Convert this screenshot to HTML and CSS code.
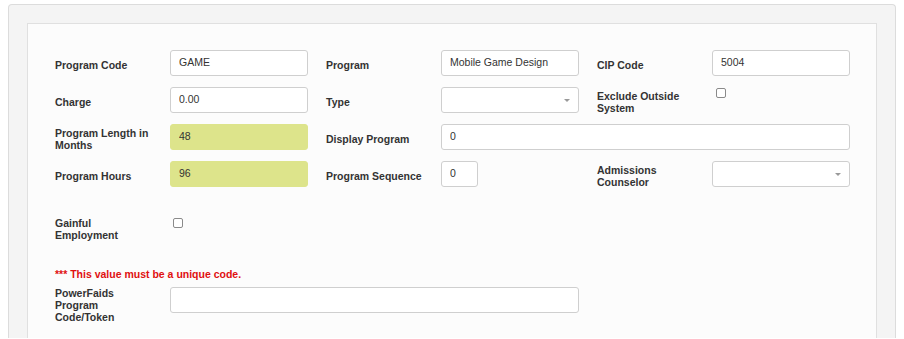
FILE: index.html
```html
<!DOCTYPE html>
<html lang="en">
<head>
    <meta charset="UTF-8">
    <title>Program Setup</title>
    <link rel="stylesheet" href="styles.css">
</head>
<body>
    <div class="panel">
        <div class="panel-body">
            <div class="form-grid">
                <label class="field-label">Program Code</label>
                <input class="field-input" type="text" value="GAME">
                <label class="field-label">Program</label>
                <input class="field-input" type="text" value="Mobile Game Design">
                <label class="field-label">CIP Code</label>
                <input class="field-input" type="text" value="5004">

                <label class="field-label">Charge</label>
                <input class="field-input" type="text" value="0.00">
                <label class="field-label">Type</label>
                <div class="select-box"><span class="select-arrow"></span></div>
                <label class="field-label">Exclude Outside System</label>
                <input class="check top-check" type="checkbox">

                <label class="field-label">Program Length in Months</label>
                <input class="field-input required" type="text" value="48">
                <label class="field-label">Display Program</label>
                <input class="field-input wide" type="text" value="0">

                <label class="field-label">Program Hours</label>
                <input class="field-input required" type="text" value="96">
                <label class="field-label">Program Sequence</label>
                <input class="field-input tiny" type="text" value="0">
                <label class="field-label">Admissions Counselor</label>
                <div class="select-box"><span class="select-arrow"></span></div>
            </div>

            <div class="form-row gainful">
                <label class="field-label">Gainful Employment</label>
                <input class="check" type="checkbox">
            </div>

            <div class="unique-note">*** This value must be a unique code.</div>

            <div class="form-row powerfaids">
                <label class="field-label">PowerFaids Program Code/Token</label>
                <input class="field-input long" type="text" value="">
            </div>
        </div>
    </div>
</body>
</html>
```

FILE: styles.css
```css
body {
    margin: 0;
    background: #fff;
    font-family: "Liberation Sans", Arial, sans-serif;
    color: #333;
    overflow: hidden;
}
.panel {
    margin: 4px 8px 0 8px;
    padding: 18px 18px 0 18px;
    background: #f4f4f4;
    border: 1px solid #dcdcdc;
    border-bottom: none;
    border-radius: 4px 4px 0 0;
}
.panel-body {
    background: #fcfcfc;
    border: 1px solid #e0e0e0;
    border-bottom: none;
    padding: 26px 27px 15px 27px;
}
.form-grid {
    display: grid;
    grid-template-columns: 115px 156px 115px 156px 115px 138px;
    grid-auto-rows: 26px;
    row-gap: 11px;
    align-items: center;
}
.field-label {
    font-size: 10.5px;
    font-weight: bold;
    line-height: 12px;
    padding-top: 3px;
    padding-right: 17px;
    color: #333;
}
.field-input {
    box-sizing: border-box;
    width: 138px;
    height: 26px;
    margin: 0;
    padding: 0 8px 2px 8px;
    border: 1px solid #cfcfcf;
    border-radius: 3px;
    background: #fff;
    font-family: "Liberation Sans", Arial, sans-serif;
    font-size: 10.5px;
    color: #333;
    outline: none;
}
.field-input.required {
    background: #dde48b;
    border-color: #dde48b;
}
.field-input.wide {
    grid-column: 4 / 7;
    width: 409px;
}
.field-input.tiny {
    width: 37px;
}
.field-input.long {
    width: 409px;
}
.select-box {
    box-sizing: border-box;
    width: 138px;
    height: 26px;
    border: 1px solid #cfcfcf;
    border-radius: 3px;
    background: #fff;
    position: relative;
}
.select-arrow {
    position: absolute;
    right: 8px;
    top: 11px;
    width: 0;
    height: 0;
    border-left: 3px solid transparent;
    border-right: 3px solid transparent;
    border-top: 3px solid #999;
}
.check {
    appearance: none;
    -webkit-appearance: none;
    box-sizing: border-box;
    width: 10px;
    height: 10px;
    margin: 1px 0 0 3px;
    border: 1px solid #8a8a8a;
    border-radius: 2px;
    background: #fff;
    align-self: start;
}
.top-check {
    margin-left: 4px;
}
.form-row {
    display: flex;
    align-items: flex-start;
}
.form-row .field-label {
    width: 115px;
    flex-shrink: 0;
    box-sizing: border-box;
    padding-top: 0;
}
.gainful {
    margin-top: 30px;
}
.unique-note {
    margin-top: 27px;
    font-size: 10.5px;
    font-weight: bold;
    line-height: 12px;
    color: #e01010;
}
.powerfaids {
    margin-top: 7px;
}
```
